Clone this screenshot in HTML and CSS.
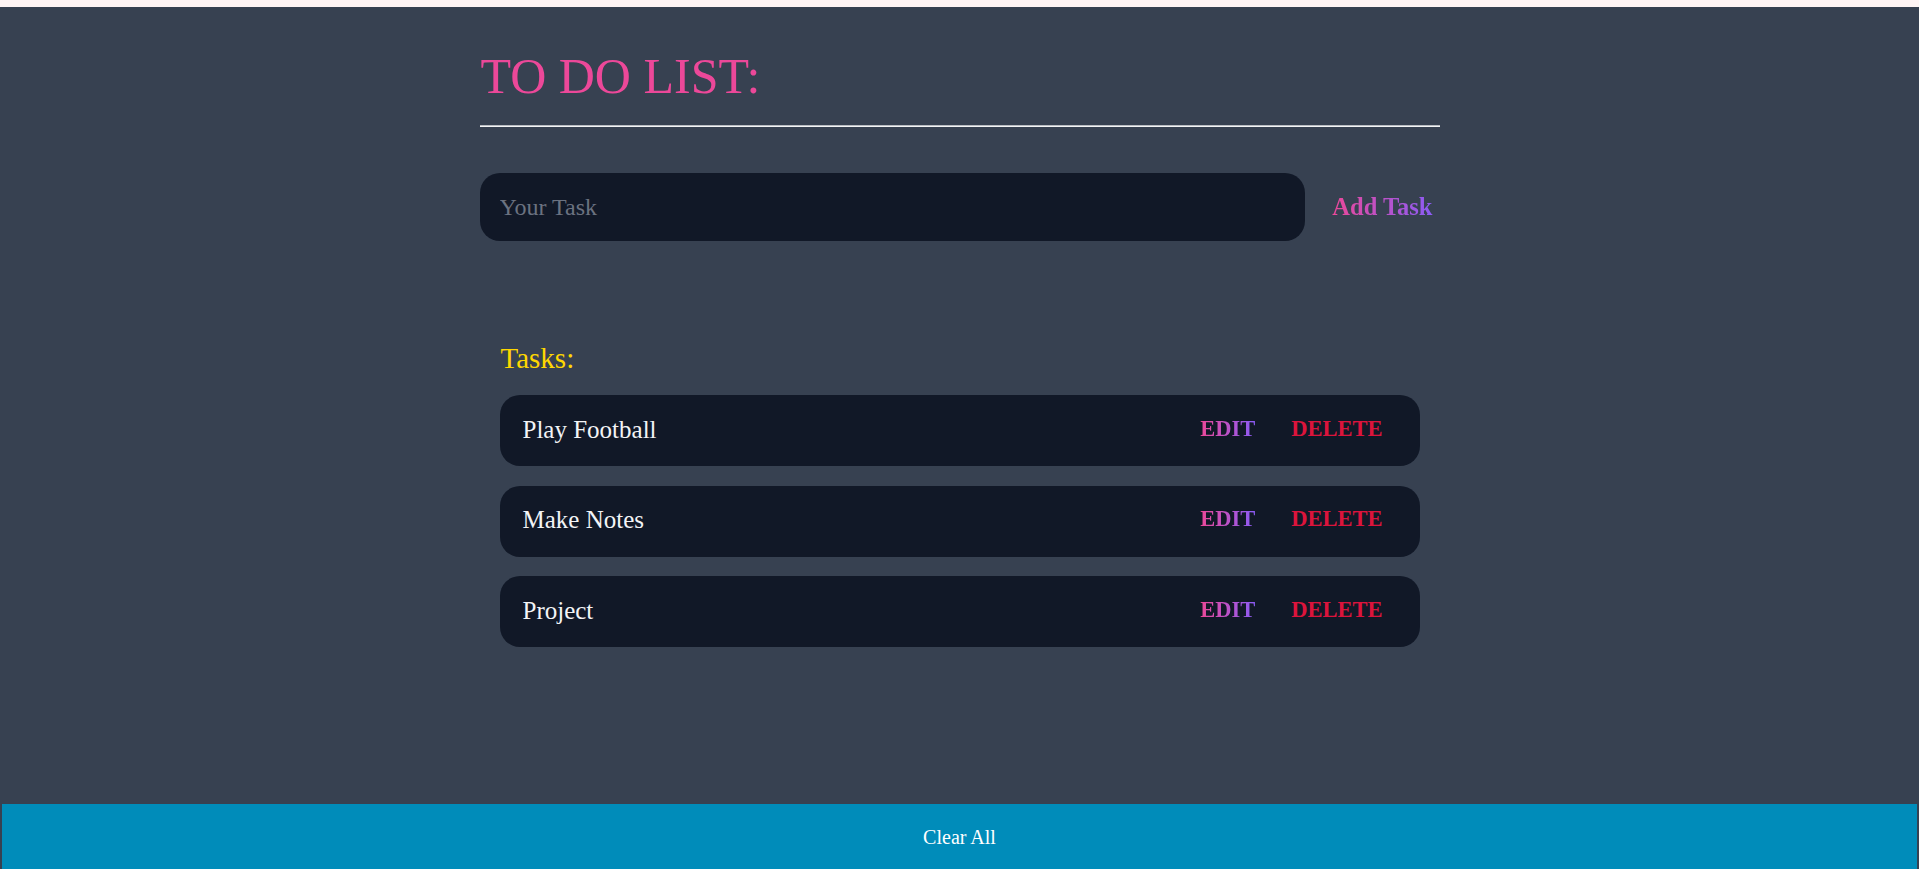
FILE: index.html
```html
<!DOCTYPE html>
<html lang="en">
<head>
<meta charset="utf-8">
<title>To Do List</title>
<link rel="stylesheet" href="styles.css">
</head>
<body>
<div class="top-strip"></div>
<main class="page">
  <div class="container">
    <h1 class="title">TO DO LIST:</h1>
    <hr class="divider">
    <form class="add-form" onsubmit="return false;">
      <input class="task-input" type="text" placeholder="Your Task">
      <button class="add-btn" type="submit"><span class="grad-text">Add Task</span></button>
    </form>
    <section class="tasks">
      <h2 class="tasks-title">Tasks:</h2>
      <ul class="task-list">
        <li class="task">
          <span class="task-name">Play Football</span>
          <div class="task-actions">
            <button class="edit-btn"><span class="grad-text">EDIT</span></button>
            <button class="delete-btn">DELETE</button>
          </div>
        </li>
        <li class="task">
          <span class="task-name">Make Notes</span>
          <div class="task-actions">
            <button class="edit-btn"><span class="grad-text">EDIT</span></button>
            <button class="delete-btn">DELETE</button>
          </div>
        </li>
        <li class="task">
          <span class="task-name">Project</span>
          <div class="task-actions">
            <button class="edit-btn"><span class="grad-text">EDIT</span></button>
            <button class="delete-btn">DELETE</button>
          </div>
        </li>
      </ul>
    </section>
  </div>
</main>
<button class="clear-btn">Clear All</button>
</body>
</html>
```

FILE: styles.css
```css
* { box-sizing: border-box; }

html, body {
  margin: 0;
  padding: 0;
}

body {
  background: #374151;
  font-family: "Liberation Serif", "Times New Roman", serif;
  color: #e5e7eb;
}

.top-strip {
  height: 7px;
  background: #fff5f5;
}

.page {
  height: 797px;
}

.container {
  width: 960px;
  margin: 0 auto;
  padding-top: 44px;
}

.title {
  margin: 0;
  font-size: 50px;
  line-height: 50px;
  font-weight: 400;
  color: #ec4899;
  padding-left: 1px;
}

.divider {
  margin: 24px 0 0 0;
  border: 0;
  border-top: 1px solid #b9bcc2;
  border-bottom: 1px solid #f3f4f6;
  height: 0;
}

.add-form {
  margin-top: 46px;
  display: flex;
  align-items: center;
}

.task-input {
  flex: 1;
  height: 68px;
  border: 0;
  border-radius: 20px;
  background: #111827;
  color: #e5e7eb;
  font-family: inherit;
  font-size: 24px;
  padding: 0 20px;
  outline: none;
}

.task-input::placeholder {
  color: #6b7280;
}

.add-btn {
  margin-left: 20px;
  padding: 0 7px;
  background: none;
  border: 0;
  font-family: inherit;
  font-size: 24.5px;
  font-weight: 700;
  line-height: 30px;
  cursor: pointer;
}

.grad-text {
  background: linear-gradient(to right, #ec4899, #8b5cf6);
  -webkit-background-clip: text;
  background-clip: text;
  color: transparent;
}

.tasks {
  margin-top: 103px;
  padding: 0 20px;
}

.tasks-title {
  margin: 0;
  font-size: 29px;
  line-height: 29px;
  font-weight: 400;
  color: #ffd700;
  padding-left: 1px;
}

.task-list {
  list-style: none;
  margin: 22px 0 0 0;
  padding: 0;
  display: flex;
  flex-direction: column;
  gap: 19.5px;
}

.task {
  height: 71px;
  display: flex;
  align-items: center;
  justify-content: space-between;
  background: #111827;
  border-radius: 20px;
  padding: 0 19px 0 23px;
}

.task-name {
  font-size: 25px;
  color: #f3f4f6;
  padding-bottom: 2px;
}

.task-actions {
  display: flex;
  align-items: center;
}

.edit-btn,
.delete-btn {
  background: none;
  border: 0;
  padding: 0 18px 4px;
  font-family: inherit;
  font-size: 22.5px;
  font-weight: 700;
  line-height: 28px;
  cursor: pointer;
}

.delete-btn {
  color: #dc143c;
}

.clear-btn {
  display: block;
  width: calc(100% - 4px);
  margin: 0 2px;
  height: 68px;
  padding: 0 0 2px;
  border: 0;
  background: #008cba;
  color: #ffffff;
  font-family: inherit;
  font-size: 20px;
  cursor: pointer;
}
```
